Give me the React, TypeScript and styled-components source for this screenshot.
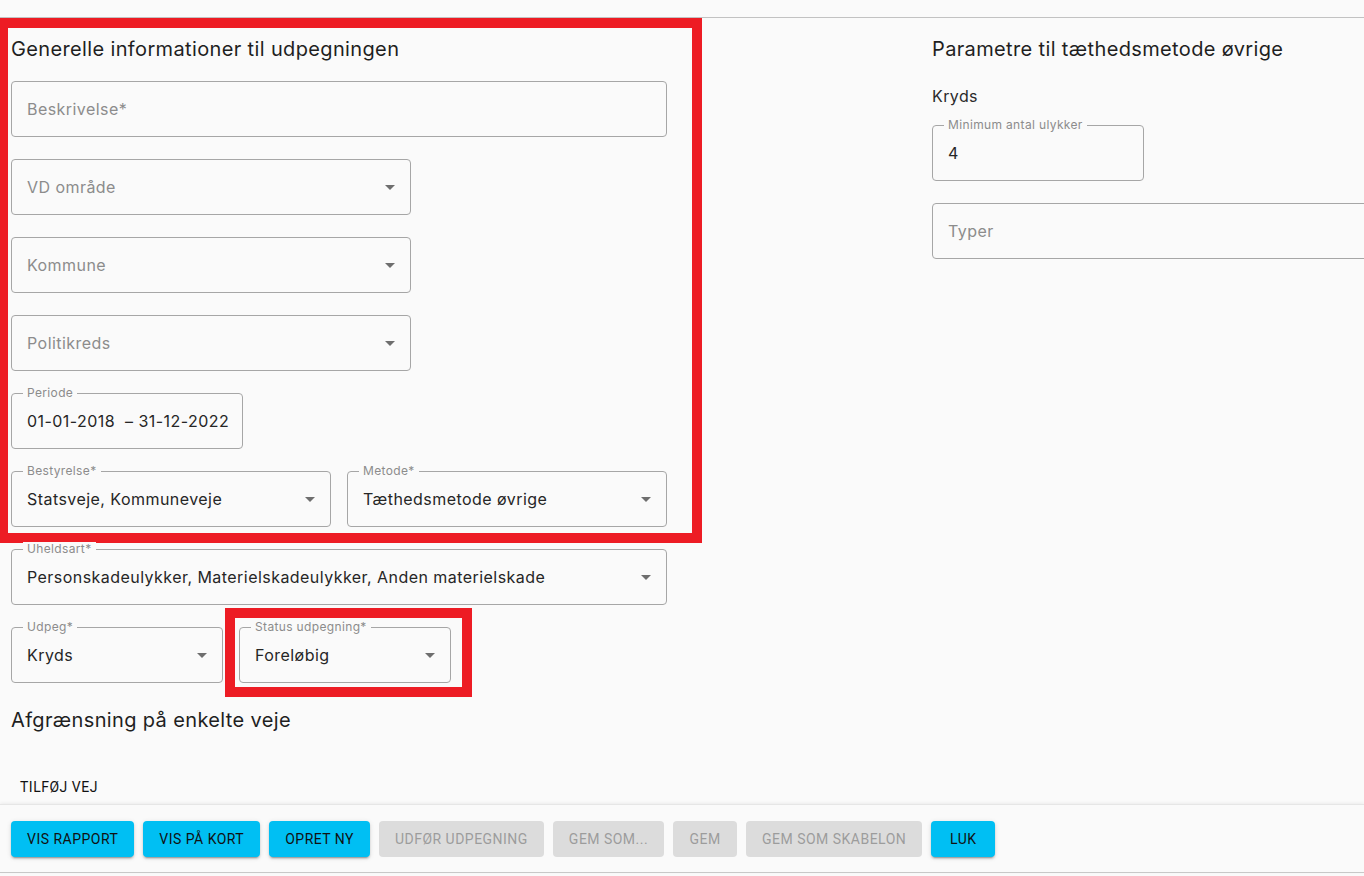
import styled, { createGlobalStyle } from 'styled-components';

const GlobalStyle = createGlobalStyle`
  html, body {
    margin: 0;
    padding: 0;
    background: #fafafa;
    font-family: Inter, "Noto Sans", sans-serif;
    overflow: hidden;
  }
`;

const Page = styled.div`
  width: 1364px;
  height: 876px;
  overflow: hidden;
  display: flex;
  flex-direction: column;
  background: #fafafa;
`;

const TopBar = styled.div`
  height: 17px;
  flex-shrink: 0;
  border-bottom: 1px solid #c2c2c2;
`;

const Content = styled.div`
  display: grid;
  grid-template-columns: 656px 1fr;
  column-gap: 265px;
  padding: 19px 0 0 11px;
`;

const Column = styled.div`
  display: flex;
  flex-direction: column;
  gap: 22px;
`;

/* red annotation frame painted over a group of fields */
const Marked = styled.div<{ $inset: string; $left?: number }>`
  position: relative;
  display: flex;
  flex-direction: column;
  gap: 22px;
  &::after {
    content: '';
    position: absolute;
    inset: ${p => p.$inset};
    border: 10px solid #ed1c24;
    border-left-width: ${p => p.$left ?? 10}px;
    pointer-events: none;
  }
`;

const Heading = styled.h2<{ $mb?: number }>`
  margin: 0 0 ${p => p.$mb ?? 0}px;
  font-size: 20px;
  line-height: 24px;
  font-weight: 400;
  letter-spacing: 0.36px;
  color: #1f1f1f;
`;

const SubLabel = styled.div`
  font-size: 16px;
  line-height: 24px;
  letter-spacing: 0.4px;
  color: #2a2a2a;
  margin: 1px 0 -5px;
`;

const Row = styled.div`
  display: flex;
  gap: 16px;
`;

const Box = styled.div<{ $w: string }>`
  position: relative;
  box-sizing: border-box;
  width: ${p => p.$w};
  height: 56px;
  flex-shrink: 0;
  border: 1px solid #a6a6a6;
  border-radius: 4px;
  display: flex;
  align-items: center;
  padding: 0 15px;
`;

const FloatLabel = styled.span`
  position: absolute;
  top: -8px;
  left: 11px;
  padding: 0 4px;
  background: #fafafa;
  font-size: 12px;
  line-height: 14px;
  letter-spacing: 0.35px;
  color: #8c8c8c;
`;

const Value = styled.span<{ $placeholder?: boolean }>`
  font-size: 16px;
  line-height: 24px;
  letter-spacing: 0.45px;
  white-space: pre;
  color: ${p => (p.$placeholder ? '#8c8c8c' : '#262626')};
`;

const Caret = styled.svg`
  margin-left: auto;
  flex-shrink: 0;
`;

const Actions = styled.div`
  margin-top: 3px;
  display: flex;
  flex-direction: column;
  gap: 37px;
`;

const TextButton = styled.button`
  align-self: flex-start;
  height: 36px;
  margin-left: 1px;
  padding: 0 8px;
  border: none;
  background: transparent;
  font-family: Roboto, "Liberation Sans", sans-serif;
  font-size: 14px;
  font-weight: 400;
  letter-spacing: 0.5px;
  color: #111;
  text-transform: uppercase;
`;

const BottomBar = styled.div`
  margin-top: -1px;
  display: flex;
  gap: 9px;
  padding: 16px 11px 15px;
  border-top: 1px solid #e6e6e6;
  border-bottom: 1px solid #c8c8c8;
  box-shadow: 0 -1px 3px rgba(0, 0, 0, 0.06);
  background: #fafafa;
`;

const ActionButton = styled.button<{ $disabled?: boolean }>`
  height: 36px;
  min-width: 64px;
  padding: 0 16px;
  border: none;
  border-radius: 4px;
  font-family: Roboto, "Liberation Sans", sans-serif;
  font-size: 14px;
  font-weight: 400;
  letter-spacing: 0.48px;
  text-transform: uppercase;
  background: ${p => (p.$disabled ? '#dcdcdc' : '#00bff3')};
  color: ${p => (p.$disabled ? '#9c9c9c' : '#111')};
  box-shadow: ${p =>
    p.$disabled
      ? 'none'
      : '0 3px 1px -2px rgba(0,0,0,0.2), 0 2px 2px 0 rgba(0,0,0,0.14), 0 1px 5px 0 rgba(0,0,0,0.12)'};
`;

type FieldProps = {
  width: string;
  label?: string;
  value?: string;
  placeholder?: string;
  select?: boolean;
};

function Field({ width, label, value, placeholder, select }: FieldProps) {
  return (
    <Box $w={width}>
      {label && <FloatLabel>{label}</FloatLabel>}
      {value ? <Value>{value}</Value> : <Value $placeholder>{placeholder}</Value>}
      {select && (
        <Caret width="10" height="5" viewBox="0 0 10 5">
          <path d="M0 0 L10 0 L5 5 Z" fill="#6e6e6e" />
        </Caret>
      )}
    </Box>
  );
}

const buttons = [
  { text: 'Vis rapport' },
  { text: 'Vis på kort' },
  { text: 'Opret ny' },
  { text: 'Udfør udpegning', disabled: true },
  { text: 'Gem som...', disabled: true },
  { text: 'Gem', disabled: true },
  { text: 'Gem som skabelon', disabled: true },
  { text: 'Luk' },
];

export default function App() {
  return (
    <Page>
      <GlobalStyle />
      <TopBar />
      <Content>
        <Column>
          <Marked $inset="-19px -35px -16px -11px" $left={8}>
            <Heading $mb={-2}>Generelle informationer til udpegningen</Heading>
            <Field width="656px" placeholder="Beskrivelse*" />
            <Field width="400px" placeholder="VD område" select />
            <Field width="400px" placeholder="Kommune" select />
            <Field width="400px" placeholder="Politikreds" select />
            <Field width="232px" label="Periode" value="01-01-2018  – 31-12-2022" />
            <Row>
              <Field width="320px" label="Bestyrelse*" value="Statsveje, Kommuneveje" select />
              <Field width="320px" label="Metode*" value="Tæthedsmetode øvrige" select />
            </Row>
          </Marked>
          <Field
            width="656px"
            label="Uheldsart*"
            value="Personskadeulykker, Materielskadeulykker, Anden materielskade"
            select
          />
          <Row>
            <Field width="212px" label="Udpeg*" value="Kryds" select />
            <Marked $inset="-19px -21px -14px -14px">
              <Field width="212px" label="Status udpegning*" value="Foreløbig" select />
            </Marked>
          </Row>
          <Actions>
            <Heading>Afgrænsning på enkelte veje</Heading>
            <TextButton>Tilføj vej</TextButton>
          </Actions>
        </Column>
        <Column>
          <Heading>Parametre til tæthedsmetode øvrige</Heading>
          <SubLabel>Kryds</SubLabel>
          <Field width="212px" label="Minimum antal ulykker" value="4" />
          <Field width="460px" placeholder="Typer" />
        </Column>
      </Content>
      <BottomBar>
        {buttons.map(b => (
          <ActionButton key={b.text} $disabled={b.disabled}>
            {b.text}
          </ActionButton>
        ))}
      </BottomBar>
    </Page>
  );
}
